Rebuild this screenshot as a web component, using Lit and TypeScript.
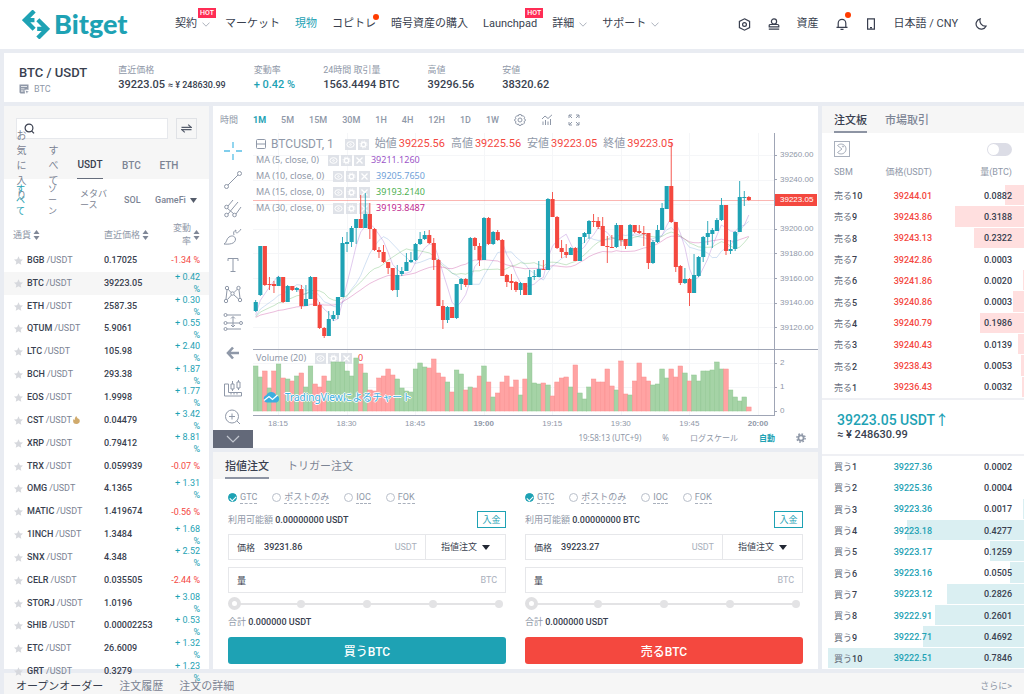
import { LitElement, html, svg, css } from "lit";
import { customElement, property, state } from "lit/decorators.js";
import { classMap } from "lit/directives/class-map.js";
import { styleMap } from "lit/directives/style-map.js";

const base = css`
  * { box-sizing: border-box; }
  :host { display: block; min-width: 0; }
  button, input, select { font: inherit; color: inherit; background: none; border: 0; padding: 0; margin: 0; outline: 0; }
  button, select { cursor: pointer; }
  a { color: inherit; text-decoration: none; }
  svg { display: block; flex: none; }
  .line { fill: none; stroke: currentColor; }
  .up { color: #1ea2b4; }
  .down { color: #f4483f; }
  .tabs { display: flex; height: 27px; background: #f6f6f6; font-size: 11px; color: #7c8494; }
  .tabs button { border-bottom: 2px solid transparent; white-space: nowrap; }
  .tabs .on { color: #393f4f; border-color: #8d94a3; }
`;

/* ---------- header ---------- */

const chevron = svg`<svg class="line" width="8" height="5" viewBox="0 0 8 5" stroke-width="0.8"><path d="M.5.6 4 4.2 7.5.6"/></svg>`;

@customElement("site-header")
class SiteHeader extends LitElement {
  static styles = [base, css`
    :host { background: #fff; height: 49px; font-size: 11px; color: #393f4f; }
    .bar { display: flex; align-items: center; height: 48px; padding: 0 37px 0 22px; }
    .logo { display: flex; align-items: center; gap: 4px; color: #1ea2b4; width: 153px; flex: none; }
    .word { font: 900 27px/30px Lato, sans-serif; }
    nav, .side { display: flex; align-items: center; white-space: nowrap; line-height: 16px; }
    nav { gap: 15px; flex: 1; }
    nav a { display: flex; align-items: center; gap: 5px; position: relative; }
    nav svg { color: #9aa1ae; }
    .hot { position: absolute; top: -8px; right: -6px; height: 10px; padding: 0 2px; background: #ff2d55; color: #fff; font: 500 7px/10px Roboto, sans-serif; }
    .dot { position: absolute; top: -2px; right: -3px; width: 6px; height: 6px; border-radius: 50%; background: #ff3c00; }
    .side { gap: 17px; }
    .bell { position: relative; }
    .bell .dot { top: -6px; }
  `];
  render() {
    return html`<header class="bar">
      <a class="logo" href="#" aria-label="Bitget">
        <svg class="line" width="28" height="29" viewBox="67 30 83 86" stroke-width="13">
          <path d="M103 33 76 60 103 87M77 60H104M114 59 141 86 114 113M140 86H112"/>
        </svg>
        <span class="word">Bitget</span>
      </a>
      <nav>
        <a href="#">契約 ${chevron}<span class="hot">HOT</span></a>
        <a href="#">マーケット</a>
        <a href="#" class="up">現物</a>
        <a href="#">コピトレ<span class="dot"></span></a>
        <a href="#">暗号資産の購入</a>
        <a href="#">Launchpad<span class="hot">HOT</span></a>
        <a href="#">詳細 ${chevron}</a>
        <a href="#">サポート ${chevron}</a>
      </nav>
      <div class="side">
        <button aria-label="設定"><svg class="line" width="13" height="13" viewBox="0 0 13 13" stroke-width="1.2"><path d="M6.5.8 11.6 3.4V9.6L6.5 12.2 1.4 9.6V3.4Z"/><circle cx="6.5" cy="6.5" r="1.9"/></svg></button>
        <button aria-label="アカウント"><svg class="line" width="12" height="12" viewBox="0 0 12 12" stroke-width="1.2"><circle cx="6" cy="3.500" r="2.600"/><path d="M1.200 8.800V7.600Q1.200 6.500 2.500 6.500H9.500Q10.800 6.500 10.800 7.600V8.800ZM.8 11.200H11.200"/></svg></button>
        <a href="#">資産</a>
        <button class="bell" aria-label="通知"><svg class="line" width="12" height="12" viewBox="0 0 12 12" stroke-width="1.200"><path d="M2.200 9.200V5.200a3.800 3.800 0 0 1 7.600 0V9.200M.5 9.400H11.500M4.500 11.300H7.500"/></svg><span class="dot"></span></button>
        <button aria-label="アプリ"><svg class="line" width="12" height="12" viewBox="0 0 12 12" stroke-width="1.200"><path d="M2.600.8H9.400V11.200H2.600ZM5 9.600H7"/></svg></button>
        <a href="#">日本語 / CNY</a>
        <button aria-label="ダークモード"><svg class="line" width="12" height="12" viewBox="0 0 12 12" stroke-width="1.200"><path d="M5.200.9A5.200 5.200 0 1 0 11 8.200 5.600 5.600 0 0 1 5.200.9Z"/></svg></button>
      </div>
    </header>`;
  }
}

/* ---------- ticker ---------- */

@customElement("pair-ticker")
class PairTicker extends LitElement {
  static styles = [base, css`
    :host { background: #fff; height: 49px; color: #393f4f; font-weight: 500; }
    .bar { display: flex; gap: 31px; padding: 10px 15px 0; white-space: nowrap; }
    h1 { margin: 0; font-size: 13px; line-height: 20px; font-weight: 500; }
    .coin { display: flex; align-items: center; gap: 5px; font-size: 9px; line-height: 12px; color: #8f98a8; font-weight: 400; }
    dl { display: flex; gap: 28px; margin: 0; }
    dt { font-size: 9px; line-height: 15px; color: #8f98a8; font-weight: 400; }
    dd { margin: 0; font-size: 11px; line-height: 13px; }
    small { font-size: 9px; }
  `];
  render() {
    return html`<section class="bar">
      <div>
        <h1>BTC / USDT</h1>
        <div class="coin"><svg width="10" height="10" viewBox="0 0 10 10" fill="#8f98a8"><path fill-rule="evenodd" d="M.5.500H9.500V6L8 5.500 5.500 6 6 9.500H1.500L.5 8.500ZM2 2.200V3H8V2.200ZM2 4.400V5.200H5.500V4.400ZM2 6.600V7.400H4.500V6.600ZM6.500 6.500 9.800 7.800 8.400 8.300 8 9.800Z"/></svg>BTC</div>
      </div>
      <dl>
        <div><dt>直近価格</dt><dd>39223.05 <small>≈ ¥ 248630.99</small></dd></div>
        <div><dt>変動率</dt><dd class="up">+ 0.42 %</dd></div>
        <div><dt>24時間 取引量</dt><dd>1563.4494 BTC</dd></div>
        <div><dt>高値</dt><dd>39296.56</dd></div>
        <div><dt>安値</dt><dd>38320.62</dd></div>
      </dl>
    </section>`;
  }
}

/* ---------- market list ---------- */

const PAIRS: [string, string, string][] = [
  ["BGB", "0.17025", "-1.34 %"], ["BTC", "39223.05", "+ 0.42 %"], ["ETH", "2587.35", "+ 0.30 %"],
  ["QTUM", "5.9061", "+ 0.55 %"], ["LTC", "105.98", "+ 2.40 %"], ["BCH", "293.38", "+ 1.87 %"],
  ["EOS", "1.9998", "+ 1.77 %"], ["CST", "0.04479", "+ 3.42 %"], ["XRP", "0.79412", "+ 8.81 %"],
  ["TRX", "0.059939", "-0.07 %"], ["OMG", "4.1365", "+ 1.31 %"], ["MATIC", "1.419674", "-0.56 %"],
  ["1INCH", "1.3484", "+ 1.68 %"], ["SNX", "4.348", "+ 2.52 %"], ["CELR", "0.035505", "-2.44 %"],
  ["STORJ", "1.0196", "+ 3.08 %"], ["SHIB", "0.00002253", "+ 0.53 %"], ["ETC", "26.6009", "+ 1.32 %"],
  ["GRT", "0.3279", "+ 1.23 %"],
];
const sorter = svg`<svg width="7" height="10" viewBox="0 0 7 10" fill="#7f8797"><path d="M3.500 0 6.500 4H.5ZM3.500 10 .5 6H6.500Z"/></svg>`;

@customElement("market-list")
class MarketList extends LitElement {
  static styles = [base, css`
    :host { background: #fff; position: relative; z-index: 1; min-height: 0; display: flex; flex-direction: column; font-size: 9px; }
    .top { background: #f6f6f6; height: 73px; padding: 12px 12px 0; display: flex; flex-direction: column; flex: none; }
    .search { display: flex; gap: 8px; height: 21px; flex: none; }
    .field { flex: 1; display: flex; align-items: center; gap: 4px; padding-left: 7px; background: #fff; border: 1px solid #e6e8ec; color: #393f4f; min-width: 0; }
    .field input { flex: 1; min-width: 0; }
    .swap { width: 21px; border: 1px solid #e0e2e6; display: grid; place-items: center; color: #555c6b; }
    .quotes { display: grid; grid-template-columns: 13px 10px 26px 18px 20px; grid-template-rows: 28px; column-gap: 19px; align-items: center; height: 40px; padding-top: 12px; font-size: 10px; line-height: 15px; color: #7c8494; font-weight: 500; }
    .quotes .on { color: #393f4f; height: 28px; border-bottom: 1px solid #666d7c; }
    .quotes .jp { width: 11px; margin: -24px 0; }
    .jp { font-weight: 400; word-break: break-all; }
    .zones { flex: none; height: 42px; padding: 0 12px; display: grid; grid-template-columns: 16px 16px 28px 15px 1fr; column-gap: 16px; align-items: center; line-height: 11px; color: #7c8494; }
    .zones button { text-align: left; }
    .zones .thin { width: 9px; }
    .more { display: flex; align-items: center; gap: 4px; white-space: nowrap; font-weight: 500; }
    .sol { font-weight: 500; }
    table { display: flex; flex-direction: column; flex: 1; min-height: 0; margin-bottom: -14px; font-weight: 500; }
    tr { display: grid; grid-template-columns: 91px 1fr 38px; padding: 0 9px; align-items: center; line-height: 13px; text-align: left; }
    thead tr { height: 28px; color: #8f98a8; }
    tbody { display: flex; flex-direction: column; flex: 1; min-height: 0; }
    tbody tr { flex: 1 1 0; min-height: 0; }
    tbody .current { background: #f6f6f6; }
    th { font-weight: 400; padding: 0; display: flex; align-items: center; gap: 2px; }
    th:last-child { justify-content: flex-end; text-align: right; }
    th:last-child span { width: 18px; }
    td { padding: 0; color: #393f4f; white-space: nowrap; }
    td:first-child { display: flex; align-items: center; }
    td small { font-size: 9px; font-weight: 400; color: #7c8494; margin-left: 2px; }
    td svg { margin: 0 4px 0 1px; }
    td:last-child { white-space: normal; width: 32px; justify-self: end; text-align: right; height: 22px; line-height: 12px; display: flex; align-items: center; justify-content: flex-end; font-weight: 400; }
    td.up { color: #1ea2b4; }
    td.down { color: #f4483f; }
    td .fire { margin: 0 0 0 1px; }
  `];
  render() {
    return html`
      <div class="top">
        <div class="search">
          <label class="field"><svg class="line" width="11" height="11" viewBox="0 0 11 11" stroke-width="1.200"><circle cx="5" cy="5" r="3.900"/><path d="M7.500 7.800 10 10.300"/></svg><input aria-label="検索"></label>
          <button class="swap" aria-label="切替"><svg class="line" width="11" height="9" viewBox="0 0 11 9" stroke-width="1.200"><path d="M.5 3.400H10.300L7.200.6M10.500 5.600H.7L3.800 8.400"/></svg></button>
        </div>
        <div class="quotes">
          <button class="jp">お気に入り</button><button class="jp">すべて</button>
          <button class="on">USDT</button><button>BTC</button><button>ETH</button>
        </div>
      </div>
      <div class="zones">
        <button class="jp thin up">すべて</button><button class="jp thin">ゾーン</button><button class="jp">メタバース</button><button class="sol">SOL</button>
        <button class="more">GameFi <svg width="7" height="5" viewBox="0 0 7 5" fill="#555c6b"><path d="M0 0H7L3.500 5Z"/></svg></button>
      </div>
      <table>
        <thead><tr><th>通貨${sorter}</th><th>直近価格${sorter}</th><th><span>変動率</span>${sorter}</th></tr></thead>
        <tbody>${PAIRS.map(([coin, price, change]) => html`
          <tr class=${classMap({ current: coin === "BTC" })}>
            <td><svg width="9" height="9" viewBox="0 0 10 10" fill="#d6d8dd"><path d="M5 .3 6.500 3.500 10 3.900 7.400 6.300 8.100 9.800 5 8 1.900 9.800 2.600 6.300 0 3.900 3.500 3.500Z"/></svg>${coin}<small>/USDT</small>${coin === "CST" ? svg`<svg class="fire" width="7" height="8" viewBox="0 0 7 8" fill="#d0aa6c"><path d="M3.300 0C4 2 5 2 5.200 3.200 5.600 3 5.600 2.600 5.600 2.200 8 5 6.500 8 3.500 8 .2 8-.5 5 .6 3 1 3.600 1.300 3.800 1.700 3.900 1.700 2.300 2.300 1 3.300 0Z"/></svg>` : ""}</td>
            <td>${price}</td>
            <td class=${change[0] === "+" ? "up" : "down"}>${change}</td>
          </tr>`)}</tbody>
      </table>`;
  }
}

/* ---------- chart ---------- */

// Each candle: body top, body bottom, wick top, wick bottom, 1 for a rise or 0 for a fall.
const CANDLES: number[][] = [
  [302, 311, 300, 312, 1], [246, 295, 246, 296, 1], [246, 285, 246, 286, 0], [284, 285, 277, 290, 0], [284, 286, 281, 293, 0],
  [277, 286, 276, 286, 1], [277, 302, 277, 303, 0], [286, 302, 285, 302, 1], [286, 290, 286, 291, 0], [288, 290, 287, 292, 1],
  [289, 306, 285, 309, 0], [299, 306, 285, 306, 1], [277, 299, 276, 299, 1], [277, 306, 277, 306, 0], [305, 328, 302, 329, 0],
  [328, 336, 327, 338, 0], [319, 336, 311, 336, 1], [315, 319, 311, 321, 1], [297, 315, 297, 319, 1], [243, 297, 237, 297, 1],
  [242, 244, 232, 252, 1], [228, 242, 226, 247, 1], [219, 228, 219, 244, 1], [219, 228, 195, 228, 0], [214, 228, 193, 228, 1],
  [214, 229, 203, 239, 0], [229, 250, 228, 251, 0], [250, 252, 247, 258, 0], [252, 262, 245, 263, 0], [262, 268, 262, 274, 0],
  [268, 290, 268, 291, 0], [275, 290, 265, 297, 1], [271, 274, 267, 276, 1], [262, 271, 253, 271, 1], [260, 262, 252, 263, 1],
  [244, 260, 243, 261, 1], [239, 244, 232, 245, 1], [235, 239, 231, 240, 1], [235, 243, 230, 244, 0], [243, 260, 238, 270, 0],
  [260, 306, 259, 306, 0], [306, 320, 300, 329, 0], [307, 320, 306, 323, 1], [307, 318, 307, 318, 0], [284, 318, 284, 319, 1],
  [279, 284, 278, 290, 1], [279, 285, 278, 287, 0], [238, 285, 237, 285, 1], [238, 246, 237, 250, 0], [246, 260, 243, 266, 0],
  [218, 260, 217, 260, 1], [218, 244, 217, 245, 0], [232, 244, 231, 245, 1], [232, 240, 230, 241, 0], [240, 276, 239, 276, 0],
  [275, 282, 274, 287, 0], [281, 283, 274, 290, 0], [282, 290, 281, 292, 0], [283, 290, 282, 295, 1], [283, 295, 283, 295, 0],
  [277, 295, 270, 295, 1], [276, 277, 270, 280, 1], [269, 277, 261, 277, 1], [269, 270, 260, 270, 0], [199, 270, 198, 270, 1],
  [199, 217, 192, 217, 0], [217, 248, 216, 249, 0], [248, 252, 240, 258, 0], [252, 255, 244, 258, 0], [248, 255, 247, 255, 1],
  [248, 261, 247, 261, 0], [237, 261, 237, 261, 1], [233, 237, 232, 243, 1], [221, 234, 220, 239, 1], [221, 222, 214, 227, 0],
  [221, 227, 217, 229, 0], [226, 246, 217, 246, 0], [246, 247, 236, 263, 0], [247, 248, 235, 248, 0], [225, 247, 223, 248, 1],
  [225, 240, 225, 246, 0], [239, 246, 239, 249, 0], [225, 246, 224, 246, 1], [225, 232, 225, 233, 0], [231, 233, 225, 234, 0],
  [233, 234, 226, 246, 0], [233, 263, 233, 269, 0], [242, 263, 240, 264, 1], [230, 242, 225, 243, 1], [208, 230, 203, 230, 1],
  [186, 209, 186, 209, 1], [186, 222, 142, 223, 0], [222, 267, 222, 272, 0], [266, 283, 265, 285, 0], [279, 283, 268, 284, 1],
  [279, 293, 278, 306, 0], [275, 293, 254, 293, 1], [257, 276, 256, 277, 1], [237, 257, 236, 262, 1], [233, 237, 221, 245, 1],
  [230, 234, 228, 248, 1], [220, 231, 218, 231, 1], [205, 220, 198, 221, 1], [205, 251, 205, 255, 0], [249, 251, 240, 254, 1],
  [232, 249, 231, 251, 1], [197, 232, 181, 232, 1], [197, 198, 191, 206, 1], [197, 200, 196, 201, 0],
];
// Traded volume per minute in pixels; a minus sign marks a selling minute.
const VOLUMES: number[] = [
  45, 34, -40, 23, -40, 47, -33, 32, -30, 35, -38, 24, 45, -27, -24, -35, 30, 49, 49, 49, 40, 35, 53, -47, 38, -21, -20, -33, -35, -42,
  -36, 32, 23, 20, 19, 42, 48, 44, -43, -52, -38, -34, 29, -19, 41, 37, -21, 24, -23, -35, 45, -29, 14, -18, -29, -35, -24, -31, 16, -32,
  58, 28, 27, -28, 26, -15, -29, -33, -34, 24, -46, 18, 12, 24, -32, -29, -29, -42, -25, 21, -50, -17, 16, -30, -48, -34, -30, 26, 27, 42,
  33, -42, -34, -45, 38, -30, 36, 30, 40, 40, 41, 49, 42, -42, 21, 14, 10, 14, -4,
];
const LEFT = 253, TOP = 133, STEP = 4.566, BASELINE = 411;
const cx = (i: number) => 255.7 + STEP * i;

function average(period: number) {
  const closes = [...Array(30).fill(318), ...CANDLES.map(c => (c[4] ? c[0] : c[1]))];
  return CANDLES.map((_, i) => {
    const part = closes.slice(31 + i - period, 31 + i);
    return `${cx(i).toFixed(1)},${(part.reduce((a, b) => a + b, 0) / period).toFixed(1)}`;
  }).join(" ");
}

const AVERAGES: [number, string, string][] = [
  [5, "39211.1260", "#9c55c8"], [10, "39205.7650", "#6f9fd8"], [15, "39193.2140", "#4caf50"], [30, "39193.8487", "#c0278f"],
];
const eye = svg`<svg class="line" width="9" height="9" viewBox="0 0 9 9"><ellipse cx="4.500" cy="4.500" rx="3.600" ry="2.800"/><circle cx="4.500" cy="4.500" r=".8"/></svg>`;
const cog = svg`<svg class="line" width="9" height="9" viewBox="0 0 9 9"><circle cx="4.500" cy="4.500" r="2.200" stroke-width="1.400"/><circle cx="4.500" cy="4.500" r="3.500" stroke-dasharray="1.300 1.450"/></svg>`;
const cross = svg`<svg class="line" width="9" height="9" viewBox="0 0 9 9" stroke-width="1.300"><path d="M1.500 1.500 7.500 7.500M7.500 1.500 1.500 7.500"/></svg>`;
const actions = (closable = true) => html`<span class="acts"><button aria-label="表示">${eye}</button><button aria-label="設定">${cog}</button>${closable ? html`<button aria-label="削除">${cross}</button>` : ""}</span>`;

const TOOLS = [
  svg`<path stroke="#58bfe6" stroke-width="1.300" d="M10 1V7M10 13V19M1 10H7M13 10H19"/>`,
  svg`<circle cx="3.500" cy="16.500" r="2"/><circle cx="16.500" cy="3.500" r="2"/><path d="M5 15 15 5"/>`,
  svg`<circle cx="3.500" cy="9" r="1.800"/><circle cx="3.500" cy="17" r="1.800"/><circle cx="11.500" cy="17" r="1.800"/><path d="M5 8 10 2M5 16 15 4M13 16 18 9M4 10 11 16"/>`,
  svg`<path d="M1 17C4 16 3 12 6 10 9 8 12 9 12.500 12 12.500 17 6 17.500 1 17ZM11 8C10 5 11 4 13 3 12 6 14 8 18 2"/>`,
  svg`<path d="M5 6V3.500H15V6M10 3.500V16.500M7.500 16.500H12.500"/>`,
  svg`<circle cx="4" cy="4" r="1.700"/><circle cx="15.500" cy="4" r="1.700"/><circle cx="9.500" cy="9.500" r="1.700"/><circle cx="3" cy="17" r="1.700"/><circle cx="17" cy="16" r="1.700"/><path d="M4 6 3 15M5 5 8 8.500M11 8.500 14.500 5M16 6 17 14M4.500 15.500 8.500 11M11 11 15.500 15"/>`,
  svg`<circle cx="2.500" cy="3" r="1.500"/><circle cx="2.500" cy="11" r="1.500"/><circle cx="18" cy="11" r="1.500"/><circle cx="2.500" cy="17" r="1.500"/><path d="M4 3H18M4 11H16M4 17H18M10 5V14M8 6.500 10 4.500 12 6.500M8 13 10 15 12 13"/>`,
  svg`<path stroke-width="2.600" d="M10 6.500 5 12 10 17.500M5 12H16"/>`,
  svg`<path d="M1.500 7V19H18.500V15.500H5.500V7ZM8 15.500V17.500M11 15.500V17.500M14 15.500V17.500M8 7H11V12H8ZM9.500 4V7M9.500 12V14M14 5V11H17V5ZM15.500 3V5M15.500 11V13"/>`,
  svg`<circle cx="9" cy="10.500" r="6.500"/><path d="M9 7.500V13.500M6 10.500H12M14 15 17 18"/>`,
];

@customElement("price-chart")
class PriceChart extends LitElement {
  @state() private frame = "1M";
  static styles = [base, css`
    :host { background: #fff; flex: 1; min-height: 0; display: flex; flex-direction: column; color: #8f98a8; font-size: 9px; }
    .frames { display: flex; align-items: center; gap: 15px; height: 27px; padding-left: 7px; flex: none; font-weight: 500; }
    .frames span { font-weight: 400; }
    .frames .on { color: #1ea2b4; font-weight: 700; }
    .body { flex: 1; min-height: 0; display: grid; grid-template-columns: 40px minmax(0, 1fr) 44px; grid-template-rows: minmax(0, 1fr) 66px 14px 18px; }
    .tools { grid-row: 1 / -1; display: flex; flex-direction: column; padding-top: 4px; min-height: 0; }
    .tools button { flex: 0 1 29px; min-height: 0; display: grid; place-items: center; }
    .tools .gap { margin-top: 8px; }
    .tools .fold { flex: 0 0 18px; background: #636979; color: #c3c7d0; }
    .plot { grid-column: 2; grid-row: 1 / 3; position: relative; border-bottom: 1px solid #9fa5b5; min-height: 0; }
    .canvas { position: absolute; inset: 0; width: 100%; height: 100%; pointer-events: none; }
    .legend, .volume { position: absolute; left: 3px; display: flex; flex-direction: column; font-family: "Noto Sans", "Noto Sans CJK JP", sans-serif; white-space: nowrap; }
    .legend { top: 3px; }
    .volume { bottom: 49px; }
    .row { display: flex; align-items: center; height: 16px; line-height: 16px; }
    .row.big { font-family: Roboto, "Noto Sans CJK JP", sans-serif; font-size: 11px; }
    .row .name { font-size: 12px; margin: 0 2px 0 5px; }
    .row b { font-weight: 400; margin: 0 6px 0 2px; }
    .acts { display: flex; gap: 2px; margin: 0 6px 0 9px; }
    .acts button { width: 11px; height: 11px; background: #dfe2e8; color: #fff; display: grid; place-items: center; }
    .credit { position: absolute; left: 10px; bottom: 10px; display: flex; align-items: center; gap: 5px; color: #3bafe0; font: 10px/16px "Noto Sans", "Noto Sans CJK JP", sans-serif; text-shadow: 1px 0 #fff, -1px 0 #fff, 0 1px #fff, 0 -1px #fff; }
    .axis { border-left: 1px solid #9fa5b5; display: flex; flex-direction: column; font: 8px/12px "Liberation Sans", sans-serif; min-height: 0; position: relative; }
    .axis span { display: flex; align-items: center; gap: 3px; }
    .axis span::before { content: ""; width: 2px; height: 1px; background: #9fa5b5; }
    .prices { justify-content: space-between; padding: 16px 0 15px; border-bottom: 1px solid #9fa5b5; }
    .volumes { gap: 12px; padding-top: 7px; }
    .tag { position: absolute; top: 61px; left: 0; right: 1px; background: #f4483f; color: #fff; padding-left: 5px; }
    .times { grid-column: 2 / -1; display: flex; justify-content: space-between; padding: 1px 36px 0 1px; font: 8px/13px "Liberation Sans", sans-serif; }
    .times span { width: 48px; text-align: center; }
    .hour { font-weight: 700; }
    .status { grid-column: 2 / -1; display: flex; justify-content: flex-end; align-items: center; gap: 21px; padding: 0 12px 2px; font: 8px/14px "Noto Sans", "Noto Sans CJK JP", sans-serif; }
    .auto { color: #1ea2b4; font-weight: 700; }
  `];
  render() {
    const frames = ["1M", "5M", "15M", "30M", "1H", "4H", "12H", "1D", "1W"];
    return html`
      <div class="frames"><span>時間</span>
        ${frames.map(f => html`<button class=${classMap({ on: f === this.frame })} @click=${() => (this.frame = f)}>${f}</button>`)}
        <button aria-label="設定"><svg class="line" width="12" height="12" viewBox="0 0 12 12"><path d="M4.800.6H7.200L7.700 2 9.200 1.700 10.600 3.300 10 4.700 11.400 5.500V6.700L10 7.500 10.500 9 9 10.500 7.600 10 7 11.400H5L4.400 10 3 10.500 1.500 9 2 7.500.6 6.700V5.500L2 4.700 1.400 3.300 2.800 1.700 4.300 2Z"/><circle cx="6" cy="6" r="2"/></svg></button>
        <button aria-label="指標"><svg class="line" width="12" height="12" viewBox="0 0 12 12"><path d="M1 5 4 2 7 4.500 11 .8M2 7.500V11M4.500 6V11M7 7.500V11M9.500 5V11"/></svg></button>
        <button aria-label="全画面"><svg class="line" width="12" height="12" viewBox="0 0 12 12"><path d="M1 4V1H4M1 1 4 4M8 1H11V4M11 1 8 4M1 8V11H4M1 11 4 8M11 8V11H8M11 11 8 8"/></svg></button>
      </div>
      <div class="body">
        <div class="tools">
          ${TOOLS.map((t, i) => html`<button class=${classMap({ gap: i === 8 })} aria-label="ツール"><svg class="line" width="20" height="20" viewBox="0 0 20 20">${t}</svg></button>`)}
          <button class="fold" aria-label="閉じる"><svg class="line" width="14" height="8" viewBox="0 0 14 8" stroke-width="1.200"><path d="M1 1 7 7 13 1"/></svg></button>
        </div>
        <div class="plot">
          <svg class="canvas" viewBox="${LEFT} ${TOP} 521 282" preserveAspectRatio="none">
            <g stroke="#f5f6f8">
              ${[155.5, 180.5, 204.5, 229.5, 253.5, 278.5, 303.5, 327.5, 363.5, 387.5].map(y => svg`<path d="M253 ${y}H774"/>`)}
              ${[278.5, 347.5, 415.5, 484.5, 552.5, 621.5, 689.5, 758.5].map(x => svg`<path d="M${x} 133V415"/>`)}
            </g>
          </svg>
          <div class="legend">
            <div class="row big">
              <svg class="line" width="10" height="10" viewBox="0 0 10 10"><rect x=".5" y=".5" width="9" height="9" rx="1"/><path d="M.5 5H9.500"/></svg>
              <span class="name">BTCUSDT, 1</span>${actions(false)}
              始値<b class="down">39225.56</b>高値<b class="down">39225.56</b>安値<b class="down">39223.05</b>終値<b class="down">39223.05</b>
            </div>
            ${AVERAGES.map(([n, v, color]) => html`<div class="row">MA (${n}, close, 0)${actions()}<span style=${styleMap({ color })}>${v}</span></div>`)}
          </div>
          <div class="volume"><div class="row">Volume (20)${actions()}<span class="down">0</span></div></div>
          <svg class="canvas" viewBox="${LEFT} ${TOP} 521 282" preserveAspectRatio="none">
            <path d="M253 349.500H774" stroke="#9fa5b5"/>
            ${VOLUMES.map((v, i) => svg`<rect x=${cx(i) - 2.3} y=${BASELINE - Math.abs(v)} width="4.600" height=${Math.abs(v)} fill=${v < 0 ? "#ffa3a3" : "#a5d3a6"} stroke=${v < 0 ? "#f98f8f" : "#8fc591"} stroke-width=".5"/>`)}
            ${AVERAGES.map(([n, , color]) => svg`<polyline points=${average(n)} fill="none" stroke=${color} stroke-opacity=".35" stroke-width=".9"/>`)}
            <path d="M253 200.500H774" stroke="#f4483f" stroke-opacity=".4"/>
            ${CANDLES.map(([t, b, h, l, rise], i) => svg`<g fill=${rise ? "#1ea2b4" : "#f4483f"}><rect x=${cx(i) - 0.45} y=${h} width=".9" height=${l - h}/><rect x=${cx(i) - 2} y=${t} width="4.100" height=${Math.max(b - t, 1)}/></g>`)}
          </svg>
          <div class="credit"><svg width="17" height="12" viewBox="0 0 17 12"><path fill="#3bafe0" d="M4 11.500A3.700 3.700 0 0 1 3.300 4.300 5.300 5.300 0 0 1 13 4 3.900 3.900 0 0 1 13.500 11.500Z"/><path fill="none" stroke="#fff" stroke-width="1.300" d="M1 9.500 6 5.500 9.500 8.500 14.500 4"/></svg>TradingViewによるチャート</div>
        </div>
        <div class="axis prices">
          ${["39260.00", "39240.00", "39220.00", "39200.00", "39180.00", "39160.00", "39140.00", "39120.00"].map(p => html`<span>${p}</span>`)}
          <div class="tag">39223.05</div>
        </div>
        <div class="axis volumes"><span>2</span><span>1</span><span>0</span></div>
        <div class="times">${["18:15", "18:30", "18:45", "19:00", "19:15", "19:30", "19:45", "20:00"].map(t => html`<span class=${classMap({ hour: t.endsWith("00") })}>${t}</span>`)}</div>
        <div class="status"><span>19:58:13 (UTC+9)</span><button>%</button><button>ログスケール</button><button class="auto">自動</button>
          <button aria-label="設定"><svg class="line" width="10" height="10" viewBox="0 0 10 10"><circle cx="5" cy="5" r="2.600" stroke-width="1.700"/><circle cx="5" cy="5" r="4.100" stroke-width="1.500" stroke-dasharray="1.600 1.620"/></svg></button></div>
      </div>`;
  }
}

/* ---------- order entry ---------- */

@customElement("order-form")
class OrderForm extends LitElement {
  @property() side = "buy";
  @property() price = "";
  static styles = [base, css`
    form { display: flex; flex-direction: column; color: #393f4f; font-size: 9px; font-weight: 500; }
    .modes { display: flex; gap: 15px; height: 13px; color: #8f98a8; font-weight: 400; }
    .modes label { display: flex; align-items: center; gap: 3px; line-height: 11px; white-space: nowrap; }
    .modes span { border-bottom: 1px dashed #a9b0bc; }
    .modes input { appearance: none; width: 9px; height: 9px; border: 1px solid #b9bfca; border-radius: 50%; display: grid; place-items: center; }
    .modes input:checked { background: #1ea2b4; border-color: #1ea2b4; }
    .modes input:checked::after { content: ""; width: 5px; height: 3px; border: solid #fff; border-width: 0 0 1px 1px; transform: rotate(-45deg); }
    .funds { display: flex; justify-content: space-between; align-items: center; height: 17px; margin-top: 7px; }
    .muted { color: #8f98a8; font-weight: 400; }
    .deposit { width: 29px; height: 17px; border: 1px solid #1ea2b4; color: #1ea2b4; line-height: 14px; font-weight: 400; }
    .field { display: flex; align-items: center; height: 26px; border: 1px solid #e6e7ea; padding-left: 8px; }
    .field.first { margin-top: 6px; }
    .field.second { margin-top: 7px; padding-right: 8px; }
    .field label { flex: none; font-weight: 400; margin-right: 9px; }
    .field input { flex: 1; min-width: 0; }
    .unit { color: #a9b0bc; font-weight: 400; }
    .kind { display: grid; align-items: center; width: 80px; height: 24px; border-left: 1px solid #e6e7ea; margin-left: 8px; }
    .kind > * { grid-area: 1 / 1; }
    .kind select { appearance: none; width: 100%; height: 24px; padding-left: 15px; font-weight: 400; }
    .kind svg { margin-left: 56px; pointer-events: none; }
    .slider { display: grid; align-items: center; height: 13px; margin-top: 4px; }
    .slider > * { grid-area: 1 / 1; }
    .stops { display: flex; justify-content: space-between; padding: 0 3px; background: linear-gradient(#e3e3e5, #e3e3e5) center / calc(100% - 12px) 2px no-repeat; }
    .stops i { width: 8px; height: 8px; border-radius: 50%; background: #e3e3e5; }
    .slider input { appearance: none; width: 100%; height: 13px; }
    .slider input::-webkit-slider-thumb { appearance: none; width: 13px; height: 13px; border-radius: 50%; border: 4px solid #e0e0e2; background: #fff; }
    .total { margin-top: 6px; line-height: 13px; }
    .submit { margin-top: 8px; height: 27px; border-radius: 3px; background: #1ea2b4; color: #fff; font-size: 12px; font-weight: 500; }
    .submit.sell { background: #f4483f; }
  `];
  render() {
    const buy = this.side === "buy";
    return html`<form @submit=${(e: Event) => e.preventDefault()}>
      <div class="modes">${["GTC", "ポストのみ", "IOC", "FOK"].map((m, i) => html`<label><input type="radio" name="mode" ?checked=${i === 0}><span>${m}</span></label>`)}</div>
      <div class="funds"><div><span class="muted">利用可能額</span> 0.00000000 ${buy ? "USDT" : "BTC"}</div><button type="button" class="deposit">入金</button></div>
      <div class="field first"><label for="price">価格</label><input id="price" .value=${this.price}><span class="unit">USDT</span>
        <div class="kind"><select aria-label="注文タイプ"><option>指値注文</option></select><svg width="8" height="5" viewBox="0 0 8 5" fill="#222733"><path d="M0 0H8L4 5Z"/></svg></div></div>
      <div class="field second"><label for="amount">量</label><input id="amount"><span class="unit">BTC</span></div>
      <div class="slider"><div class="stops"><i></i><i></i><i></i><i></i><i></i></div><input type="range" aria-label="割合" min="0" max="100" .value=${"0"}></div>
      <div class="total"><span class="muted">合計</span> 0.000000 USDT</div>
      <button class=${classMap({ submit: true, sell: !buy })}>${buy ? "買うBTC" : "売るBTC"}</button>
    </form>`;
  }
}

@customElement("order-panel")
class OrderPanel extends LitElement {
  static styles = [base, css`
    :host { background: #fff; flex: none; }
    .tabs { gap: 18px; padding-left: 12px; }
    .tabs .on { font-weight: 500; }
    .forms { display: grid; grid-template-columns: 1fr 1fr; gap: 19px; padding: 12px 15px 5px; }
  `];
  render() {
    return html`<div class="tabs"><button class="on">指値注文</button><button>トリガー注文</button></div>
      <div class="forms"><order-form side="buy" price="39231.86"></order-form><order-form side="sell" price="39223.27"></order-form></div>`;
  }
}

/* ---------- order book ---------- */

// price, amount, depth as a share of the panel's width
const ASKS: [string, string, number][] = [
  ["39244.01", "0.0882", 9.5], ["39243.86", "0.3188", 34], ["39243.13", "0.2322", 25], ["39242.86", "0.0003", 0], ["39241.86", "0.0020", 0.5],
  ["39240.86", "0.0003", 5.5], ["39240.79", "0.1986", 22], ["39240.43", "0.0139", 3], ["39238.43", "0.0053", 1.5], ["39236.43", "0.0032", 1],
];
const BIDS: [string, string, number][] = [
  ["39227.36", "0.0002", 0], ["39225.36", "0.0004", 0], ["39223.36", "0.0017", 0.5], ["39223.18", "0.4277", 58], ["39223.17", "0.1259", 17],
  ["39223.16", "0.0505", 7], ["39223.12", "0.2826", 38], ["39222.91", "0.2601", 44], ["39222.71", "0.4692", 50], ["39222.51", "0.7846", 97],
];

@customElement("order-book")
class OrderBook extends LitElement {
  static styles = [base, css`
    :host { background: #fff; min-height: 0; display: flex; flex-direction: column; font-size: 9px; font-weight: 500; color: #393f4f; }
    .tabs { gap: 18px; padding-left: 12px; flex: none; }
    .tabs .on { font-weight: 500; }
    .view { display: flex; align-items: center; justify-content: space-between; height: 32px; padding: 0 12px; flex: none; color: #a9b0bc; }
    .view input { appearance: none; width: 25px; height: 13px; border-radius: 7px; background: #dcdde6; display: flex; padding: 1px; }
    .view input::before { content: ""; width: 11px; height: 11px; border-radius: 50%; background: #fff; }
    table { display: flex; flex-direction: column; flex: 1 1 0; min-height: 0; }
    table.asks { flex-basis: 20px; }
    tr { display: grid; grid-template-columns: 50px 48px 1fr; align-items: center; padding: 0 12px; }
    thead tr { height: 20px; color: #8f98a8; padding-bottom: 7px; }
    thead { flex: none; }
    tbody { display: flex; flex-direction: column; flex: 1; min-height: 0; }
    tbody tr { flex: 1 1 0; min-height: 0; background: linear-gradient(to left, var(--tint) var(--depth), transparent var(--depth)) 0 0 / 100% calc(100% - 1px) no-repeat; }
    .asks { --tint: #ffdfdf; }
    .bids { --tint: #daeff2; }
    th, td { padding: 0; text-align: right; white-space: nowrap; }
    th { font-weight: 400; }
    th:first-child, td:first-child { text-align: left; }
    td small { font-size: 9px; font-weight: 400; color: #666d7b; }
    .last { flex: none; height: 58px; border: solid #eff0f4; border-width: 2px 0; padding: 12px 15px 0; }
    .price { font-size: 14px; line-height: 16px; font-weight: 500; }
    .fiat { font-size: 11px; line-height: 14px; }
  `];
  private rows(kind: string, label: string, data: [string, string, number][], number: (i: number) => number) {
    return html`<tbody>${data.map(([price, amount, depth], i) => html`<tr style=${styleMap({ "--depth": `${depth}%` })}><td><small>${label}</small>${number(i)}</td><td class=${kind}>${price}</td><td>${amount}</td></tr>`)}</tbody>`;
  }
  render() {
    return html`
      <div class="tabs"><button class="on">注文板</button><button>市場取引</button></div>
      <div class="view"><svg class="line" width="16" height="16" viewBox="0 0 16 16"><rect x=".5" y=".5" width="15" height="15"/><path d="M3.500 4.500A5 5 0 1 1 3.500 11.500L8 8Z"/><circle cx="9" cy="5.500" r=".6"/></svg><input type="checkbox" aria-label="表示切替"></div>
      <table class="asks"><thead><tr><th>SBM</th><th>価格(USDT)</th><th>量(BTC)</th></tr></thead>${this.rows("down", "売る", ASKS, i => 10 - i)}</table>
      <div class="last"><div class="price up">39223.05 USDT↑</div><div class="fiat">≈ ¥ 248630.99</div></div>
      <table class="bids">${this.rows("up", "買う", BIDS, i => i + 1)}</table>`;
  }
}

/* ---------- page ---------- */

@customElement("app-root")
class AppRoot extends LitElement {
  static styles = [base, css`
    :host { display: flex; flex-direction: column; height: 100vh; overflow: hidden; background: #e9ecf2; color: #393f4f; font-family: Roboto, "Noto Sans CJK JP", sans-serif; }
    site-header, pair-ticker { flex: none; }
    pair-ticker, main, footer { margin: 4px 0 0 4px; }
    main { flex: 1; min-height: 0; display: grid; grid-template-columns: 205px minmax(0, 1fr) 202px; grid-template-rows: minmax(0, 1fr); gap: 4px; }
    .center { display: flex; flex-direction: column; gap: 4px; min-height: 0; min-width: 0; }
    footer { flex: none; height: 21px; background: #f6f6f6; display: flex; gap: 16px; padding: 6px 12px 0; font-size: 11px; line-height: 15px; color: #7c8494; }
    footer .on { color: #393f4f; }
    footer a { margin-left: auto; font-size: 9px; color: #8f98a8; }
  `];
  render() {
    return html`
      <site-header></site-header>
      <pair-ticker></pair-ticker>
      <main>
        <market-list></market-list>
        <div class="center"><price-chart></price-chart><order-panel></order-panel></div>
        <order-book></order-book>
      </main>
      <footer><button class="on">オープンオーダー</button><button>注文履歴</button><button>注文の詳細</button><a href="#">さらに&gt;</a></footer>`;
  }
}
